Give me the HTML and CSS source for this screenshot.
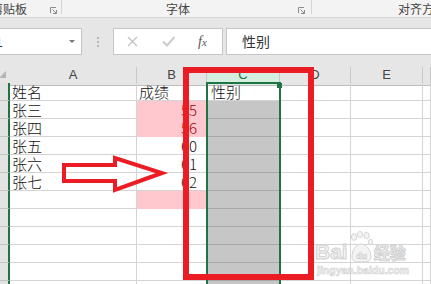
FILE: index.html
```html
<!DOCTYPE html>
<html lang="zh-CN">
<head>
    <meta charset="UTF-8">
    <title>成绩表</title>
    <link rel="stylesheet" href="styles.css">
</head>
<body>
    <!-- Faixa de grupos da fita -->
    <div class="ribbon">
        <div class="grp grp-clip">
            <span class="grp-label">剪贴板</span>
            <svg class="launcher" width="7" height="7" viewBox="0 0 7 7"><path d="M0.5 6V0.5H6" fill="none" stroke="#8a8a8a"/><path d="M2.5 2.5L6 6M3 6.5H6.5V3" fill="none" stroke="#8a8a8a"/></svg>
        </div>
        <div class="grp grp-font">
            <span class="grp-label">字体</span>
            <svg class="launcher" width="7" height="7" viewBox="0 0 7 7"><path d="M0.5 6V0.5H6" fill="none" stroke="#8a8a8a"/><path d="M2.5 2.5L6 6M3 6.5H6.5V3" fill="none" stroke="#8a8a8a"/></svg>
        </div>
        <div class="grp grp-align">
            <span class="grp-label">对齐方式</span>
        </div>
    </div>

    <!-- Barra de fórmulas -->
    <div class="fbar">
        <div class="namebox"><span class="name">C1</span><span class="caret"></span></div>
        <div class="grip">
            <svg width="2" height="10" viewBox="0 0 2 10"><rect y="0" width="2" height="2" fill="#b8b8b8"/><rect y="4" width="2" height="2" fill="#b8b8b8"/><rect y="8" width="2" height="2" fill="#b8b8b8"/></svg>
        </div>
        <div class="fxbox">
            <svg class="ico-x" width="11" height="11" viewBox="0 0 11 11"><path d="M1 1L10 10M10 1L1 10" stroke="#c4c4c4" stroke-width="1.4"/></svg>
            <svg class="ico-ok" width="13" height="11" viewBox="0 0 13 11"><path d="M1 5.5L5 9.5L12.5 1" fill="none" stroke="#cbcbcb" stroke-width="2"/></svg>
            <span class="fx"><i>f</i><i class="fx-x">x</i></span>
        </div>
        <div class="finput">性别</div>
    </div>

    <!-- Planilha -->
    <div class="sheet">
        <div class="hrow">
            <div class="corner"><svg width="8" height="15" viewBox="0 0 8 15"><polygon points="6,4 6,11 -1,11" fill="#b4b4b4"/></svg></div>
            <div>A</div>
            <div>B</div>
            <div class="hsel">C</div>
            <div>D</div>
            <div>E</div>
            <div></div>
        </div>
        <div class="row"><div class="rh"></div><div>姓名</div><div>成绩</div><div class="active">性别</div><div></div><div></div><div></div></div>
        <div class="row"><div class="rh"></div><div>张三</div><div class="num low">55</div><div class="shade"></div><div></div><div></div><div></div></div>
        <div class="row"><div class="rh"></div><div>张四</div><div class="num low">56</div><div class="shade"></div><div></div><div></div><div></div></div>
        <div class="row"><div class="rh"></div><div>张五</div><div class="num">60</div><div class="shade"></div><div></div><div></div><div></div></div>
        <div class="row"><div class="rh"></div><div>张六</div><div class="num">61</div><div class="shade"></div><div></div><div></div><div></div></div>
        <div class="row"><div class="rh"></div><div>张七</div><div class="num">62</div><div class="shade"></div><div></div><div></div><div></div></div>
        <div class="row"><div class="rh"></div><div></div><div class="num low"></div><div class="shade"></div><div></div><div></div><div></div></div>
        <div class="row"><div class="rh"></div><div></div><div></div><div class="shade"></div><div></div><div></div><div></div></div>
        <div class="row"><div class="rh"></div><div></div><div></div><div class="shade"></div><div></div><div></div><div></div></div>
        <div class="row"><div class="rh"></div><div></div><div></div><div class="shade"></div><div></div><div></div><div></div></div>
        <div class="row"><div class="rh"></div><div></div><div></div><div class="shade"></div><div></div><div></div><div></div></div>
        <div class="row"><div class="rh"></div><div></div><div></div><div class="shade"></div><div></div><div></div><div></div></div>

        <!-- Seleção da coluna C -->
        <div class="sel"><span class="handle"></span></div>
    </div>

    <!-- Marcas vermelhas desenhadas por cima -->
    <svg class="marks" width="431" height="284" viewBox="0 0 431 284">
        <rect x="186" y="70" width="125" height="207" fill="none" stroke="#ec1c24" stroke-width="6"/>
        <polygon points="64,165 115,165 115,158 162,173 115,190 115,181 64,181" fill="none" stroke="#ec1c24" stroke-width="4"/>
    </svg>

    <!-- Marca d'água -->
    <div class="wm">
        <div class="wm-main">
            <span>Bai</span>
            <svg class="paw" width="24" height="32" viewBox="0 0 24 32">
                <ellipse cx="5" cy="6" rx="2.6" ry="3.4" fill="#f4f4f4" stroke="#d4d4d4"/>
                <ellipse cx="11" cy="3.5" rx="2.6" ry="3" fill="#f4f4f4" stroke="#d4d4d4"/>
                <ellipse cx="17.5" cy="4.5" rx="2.6" ry="3.2" fill="#f4f4f4" stroke="#d4d4d4"/>
                <ellipse cx="21.5" cy="11" rx="2" ry="2.8" fill="#f4f4f4" stroke="#d4d4d4"/>
                <path d="M3 26C3 19 7 13 12 13C17 13 22 19 22 26C22 30 18 31 12 31C6 31 3 30 3 26Z" fill="#f4f4f4" stroke="#d4d4d4"/>
                <text x="12.5" y="28" text-anchor="middle" class="paw-txt">du</text>
            </svg>
            <span class="wm-cn">经验</span>
        </div>
        <div class="wm-url">jingyan.baidu.com</div>
    </div>
</body>
</html>
```

FILE: styles.css
```css
/* Planilha estilo Excel */
* {
    box-sizing: border-box;
}
html {
    overflow: hidden;
}
body {
    margin: 0;
    width: 431px;
    height: 284px;
    overflow: hidden;
    position: relative;
    background: #fff;
    font-family: "Noto Sans CJK SC", sans-serif;
}

/* Fita */
.ribbon {
    display: flex;
    align-items: flex-start;
    height: 18px;
    background: #f3f3f3;
    border-bottom: 1px solid #d5d5d5;
    font-size: 12px;
    color: #444;
    white-space: nowrap;
    overflow: hidden;
}
.grp {
    display: flex;
    align-items: flex-start;
    flex-shrink: 0;
    height: 14px;
    border-right: 1px solid #d5d5d5;
}
.grp-label {
    line-height: 18px;
}
.grp-clip {
    width: 62px;
}
.grp-clip .grp-label {
    margin-left: -9px;
}
.grp-font {
    width: 250px;
}
.grp-font .grp-label {
    margin-left: 104px;
}
.grp-align {
    flex: 1 1 0;
    min-width: 0;
    border-right: none;
}
.grp-align .grp-label {
    margin-left: 86px;
}
.launcher {
    margin-left: auto;
    margin-top: 7px;
}
.grp-clip .launcher {
    margin-right: 4px;
}
.grp-font .launcher {
    margin-right: 6px;
}

/* Barra de fórmulas */
.fbar {
    display: flex;
    align-items: flex-start;
    height: 49px;
    padding-top: 10px;
    background: #e6e6e6;
}
.namebox {
    width: 83px;
    height: 27px;
    margin-left: -1px;
    background: #fff;
    border: 1px solid #c6c6c6;
    display: flex;
    align-items: center;
    justify-content: space-between;
    padding-right: 6px;
    overflow: hidden;
    font: 14px "Liberation Sans", sans-serif;
    color: #333;
}
.name {
    margin-left: -15px;
}
.caret {
    width: 0;
    height: 0;
    border-left: 3px solid transparent;
    border-right: 3px solid transparent;
    border-top: 3px solid #777;
}
.grip {
    width: 31px;
    height: 27px;
    display: flex;
    align-items: center;
    justify-content: center;
    padding-left: 1px;
}
.fxbox {
    width: 110px;
    height: 27px;
    background: #fff;
    border: 1px solid #c6c6c6;
    display: flex;
    align-items: center;
}
.ico-x {
    margin-left: 13px;
}
.ico-ok {
    margin-left: 24px;
}
.fx {
    margin-left: 23px;
    font: italic 14px "Liberation Serif", serif;
    color: #555;
}
.fx-x {
    font-size: 11px;
}
.finput {
    flex: 1;
    height: 27px;
    margin-left: 3px;
    margin-right: -2px;
    background: #fff;
    border: 1px solid #c6c6c6;
    padding-left: 15px;
    font-size: 14px;
    line-height: 25px;
    color: #333;
}

/* Grade */
.sheet {
    position: relative;
}
.hrow,
.row {
    display: grid;
    grid-template-columns: 10px 127px 70px 73px 71px 72px 1fr;
}
.hrow {
    height: 16px;
}
.hrow > div {
    background: #e6e6e6;
    border-right: 1px solid #c8c8c8;
    border-bottom: 1px solid #bdbdbd;
    font: 13px "Liberation Sans", sans-serif;
    line-height: 15px;
    color: #444;
    text-align: center;
}
.hrow .corner {
    border-right: none;
    text-align: left;
}
.hrow .hsel {
    background: #d3f0e0;
    color: #217346;
}
.row {
    height: 18px;
    font-size: 15px;
    font-weight: 300;
    color: #111;
}
.row > div {
    border-right: 1px solid #d4d4d4;
    border-bottom: 1px solid #d4d4d4;
    padding-left: 2px;
    line-height: 17px;
    white-space: nowrap;
    overflow: hidden;
}
.row .rh {
    background: #e3e3e3;
    border-right: 2px solid #217346;
    border-bottom-color: #c4c4c4;
}
.row .active {
    padding-left: 4px;
}
.row .shade {
    background: #c6c6c6;
    border-bottom-color: #a8a8a8;
}
.row .low {
    background: #ffc7ce;
    color: #9c0006;
    border-bottom-color: #ffc7ce;
}
.row .num {
    text-align: right;
    padding-right: 9px;
}
.sel {
    position: absolute;
    left: 206px;
    top: 15px;
    bottom: 0;
    width: 75px;
    border: 2px solid #217346;
    border-bottom: none;
}
.handle {
    position: absolute;
    left: 69px;
    top: -1px;
    width: 5px;
    height: 5px;
    background: #217346;
}

/* Marcas */
.marks {
    position: absolute;
    left: 0;
    top: 0;
    pointer-events: none;
}

/* Marca d'água */
.wm {
    position: absolute;
    left: 315px;
    top: 231px;
    color: #f4f4f4;
    -webkit-text-stroke: 1px #d2d2d2;
    font-family: "Liberation Sans", sans-serif;
    font-weight: bold;
    pointer-events: none;
}
.wm-main {
    display: flex;
    align-items: flex-end;
    font-size: 21px;
    line-height: 22px;
}
.paw {
    display: block;
    margin: 0 1px;
}
.paw-txt {
    font: bold 9px "Liberation Sans", sans-serif;
    fill: #f4f4f4;
    stroke: #cfcfcf;
    stroke-width: 0.6;
}
.wm-cn {
    font-size: 16px;
    font-family: "Noto Sans CJK SC", sans-serif;
}
.wm-url {
    font-size: 10.5px;
    line-height: 14px;
    margin-left: 2px;
    -webkit-text-stroke: 0.6px #d2d2d2;
}
```
